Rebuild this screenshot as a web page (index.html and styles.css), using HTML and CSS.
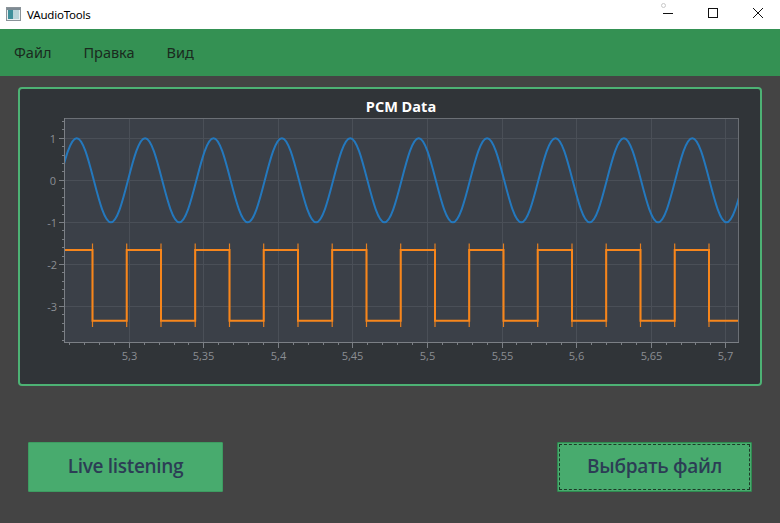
FILE: index.html
```html
<!DOCTYPE html>
<html lang="ru">
<head>
<meta charset="utf-8">
<title>VAudioTools</title>
<link rel="stylesheet" href="styles.css">
</head>
<body>
<div class="window">
  <header class="titlebar">
    <svg class="app-icon" width="15" height="14" viewBox="0 0 15 14">
      <rect x="0.5" y="0.5" width="14" height="13" fill="#e8eef0" stroke="#8a9399"/>
      <rect x="2" y="3" width="5" height="9" fill="#3f8f9a"/>
      <rect x="7" y="3" width="6" height="9" fill="#b9d3d8"/>
      <rect x="1" y="1" width="13" height="2" fill="#7d8a93"/>
    </svg>
    <span class="app-title">VAudioTools</span>
    <div class="win-controls">
      <span class="win-btn win-min">
        <span class="help-ring"></span>
        <svg width="10" height="10" viewBox="0 0 10 10"><path d="M0 5.5H10" stroke="#111" stroke-width="1"/></svg>
      </span>
      <span class="win-btn">
        <svg width="10" height="10" viewBox="0 0 10 10"><rect x="0.5" y="0.5" width="9" height="9" fill="none" stroke="#111" stroke-width="1"/></svg>
      </span>
      <span class="win-btn">
        <svg width="10" height="10" viewBox="0 0 10 10"><path d="M0 0L10 10M10 0L0 10" stroke="#111" stroke-width="1"/></svg>
      </span>
    </div>
  </header>

  <nav class="menubar">
    <span class="menu-item">Файл</span>
    <span class="menu-item">Правка</span>
    <span class="menu-item">Вид</span>
  </nav>

  <main class="content">
    <section class="chart-frame">
      <svg class="chart" width="740" height="295" viewBox="20 89 740 295">
        <defs>
          <clipPath id="plotclip"><rect x="65" y="119" width="673" height="223"/></clipPath>
        </defs>
        <text class="chart-title" x="401" y="112">PCM Data</text>
        <rect x="64.5" y="118.5" width="674" height="224" fill="#3b4048" stroke="#6b6f75"/>
        <path class="grid" d="M129.5 119V342M203.5 119V342M278.5 119V342M352.5 119V342M427.5 119V342M502.5 119V342M576.5 119V342M651.5 119V342M725.5 119V342M65 138.5H738M65 180.5H738M65 222.5H738M65 264.5H738M65 306.5H738"/>
        <path class="axis" d="M64.5 118V343M64 342.5H739"/>
        <path class="axis" d="M59 138.5H64.5M59 180.5H64.5M59 222.5H64.5M59 264.5H64.5M59 306.5H64.5M62 121.5H64.5M62 129.5H64.5M62 146.5H64.5M62 155.5H64.5M62 163.5H64.5M62 171.5H64.5M62 188.5H64.5M62 197.5H64.5M62 205.5H64.5M62 214.5H64.5M62 230.5H64.5M62 239.5H64.5M62 247.5H64.5M62 256.5H64.5M62 272.5H64.5M62 281.5H64.5M62 289.5H64.5M62 298.5H64.5M62 314.5H64.5M62 323.5H64.5M62 331.5H64.5M62 340.5H64.5"/>
        <path class="axis" d="M129.5 342V348M203.5 342V348M278.5 342V348M352.5 342V348M427.5 342V348M502.5 342V348M576.5 342V348M651.5 342V348M725.5 342V348M69.5 342V345M84.5 342V345M99.5 342V345M114.5 342V345M144.5 342V345M159.5 342V345M174.5 342V345M188.5 342V345M218.5 342V345M233.5 342V345M248.5 342V345M263.5 342V345M293.5 342V345M308.5 342V345M323.5 342V345M338.5 342V345M367.5 342V345M382.5 342V345M397.5 342V345M412.5 342V345M442.5 342V345M457.5 342V345M472.5 342V345M487.5 342V345M516.5 342V345M531.5 342V345M546.5 342V345M561.5 342V345M591.5 342V345M606.5 342V345M621.5 342V345M636.5 342V345M666.5 342V345M681.5 342V345M695.5 342V345M710.5 342V345"/>
        <g class="ylabels">
          <text x="56" y="142.5">1</text>
          <text x="56" y="184.5">0</text>
          <text x="57" y="226.5">-1</text>
          <text x="57" y="268.5">-2</text>
          <text x="57" y="310.5">-3</text>
        </g>
        <g class="xlabels">
          <text x="129.5" y="360">5,3</text>
          <text x="203.5" y="360">5,35</text>
          <text x="278.5" y="360">5,4</text>
          <text x="352.5" y="360">5,45</text>
          <text x="427.5" y="360">5,5</text>
          <text x="502.5" y="360">5,55</text>
          <text x="576.5" y="360">5,6</text>
          <text x="651.5" y="360">5,65</text>
          <text x="725.5" y="360">5,7</text>
        </g>
        <g clip-path="url(#plotclip)">
          <path class="sine" d="M59.6 180.3c5.577 -21.54 10.911 -42.05 17.1 -42.05
            s11.523 20.51 17.1 42.05s10.911 42.05 17.1 42.05s11.523 -20.51 17.1 -42.05s10.911 -42.05 17.1 -42.05
            s11.523 20.51 17.1 42.05s10.911 42.05 17.1 42.05s11.523 -20.51 17.1 -42.05s10.911 -42.05 17.1 -42.05
            s11.523 20.51 17.1 42.05s10.911 42.05 17.1 42.05s11.523 -20.51 17.1 -42.05s10.911 -42.05 17.1 -42.05
            s11.523 20.51 17.1 42.05s10.911 42.05 17.1 42.05s11.523 -20.51 17.1 -42.05s10.911 -42.05 17.1 -42.05
            s11.523 20.51 17.1 42.05s10.911 42.05 17.1 42.05s11.523 -20.51 17.1 -42.05s10.911 -42.05 17.1 -42.05
            s11.523 20.51 17.1 42.05s10.911 42.05 17.1 42.05s11.523 -20.51 17.1 -42.05s10.911 -42.05 17.1 -42.05
            s11.523 20.51 17.1 42.05s10.911 42.05 17.1 42.05s11.523 -20.51 17.1 -42.05s10.911 -42.05 17.1 -42.05
            s11.523 20.51 17.1 42.05s10.911 42.05 17.1 42.05s11.523 -20.51 17.1 -42.05s10.911 -42.05 17.1 -42.05
            s11.523 20.51 17.1 42.05s10.911 42.05 17.1 42.05s11.523 -20.51 17.1 -42.05s10.911 -42.05 17.1 -42.05
            s11.523 20.51 17.1 42.05s10.911 42.05 17.1 42.05s11.523 -20.51 17.1 -42.05s10.911 -42.05 17.1 -42.05"/>
          <path class="square" d="M64.5 250H92.5V320.7H126.7V250H161V320.7H195.2V250H229.5V320.7H263.7V250H298V320.7H332.2V250H366.5V320.7H400.7V250H435V320.7H469.2V250H503.5V320.7H537.7V250H572V320.7H606.2V250H640.5V320.7H674.7V250H709V320.7H738"/>
          <path class="spikes" d="M92.5 243.5V327M126.7 243.5V327M161 243.5V327M195.2 243.5V327M229.5 243.5V327M263.7 243.5V327M298 243.5V327M332.2 243.5V327M366.5 243.5V327M400.7 243.5V327M435 243.5V327M469.2 243.5V327M503.5 243.5V327M537.7 243.5V327M572 243.5V327M606.2 243.5V327M640.5 243.5V327M674.7 243.5V327M709 243.5V327"/>
        </g>
      </svg>
    </section>

    <div class="actions">
      <button class="btn">Live listening</button>
      <button class="btn btn-focus">Выбрать файл</button>
    </div>
  </main>
</div>
</body>
</html>
```

FILE: styles.css
```css
* { box-sizing: border-box; }

html, body {
  margin: 0;
  padding: 0;
  width: 780px;
  height: 523px;
  overflow: hidden;
  background: #444444;
}

.window {
  width: 780px;
  height: 523px;
  display: flex;
  flex-direction: column;
}

.titlebar {
  height: 29px;
  background: #ffffff;
  display: flex;
  align-items: center;
  padding-left: 6px;
  font-family: "Noto Sans", "Open Sans", sans-serif;
  font-size: 11.5px;
  color: #000;
}

.app-icon {
  display: block;
  margin-top: -1px;
}

.app-title {
  margin-left: 6px;
  margin-top: -1px;
  letter-spacing: -0.2px;
}

.win-controls {
  margin-left: auto;
  display: flex;
  height: 29px;
}

.win-btn {
  position: relative;
  width: 45px;
  height: 29px;
  display: flex;
  align-items: center;
  justify-content: center;
  padding-bottom: 3px;
}

.win-btn svg { display: block; }

.help-ring {
  position: absolute;
  left: 16px;
  top: 3px;
  width: 5px;
  height: 5px;
  border: 1px solid #c8c8c8;
  border-radius: 50%;
}

.menubar {
  height: 47px;
  background: #349153;
  display: flex;
  align-items: center;
  gap: 32px;
  padding-left: 14px;
  padding-bottom: 1px;
  font-family: "Noto Sans", "Open Sans", sans-serif;
  font-size: 14.5px;
  color: #1a2a1e;
}

.content {
  flex: 1;
  padding: 11px 18px 0 18px;
  display: flex;
  flex-direction: column;
}

.chart-frame {
  width: 744px;
  height: 299px;
  border: 2px solid #4db274;
  border-radius: 4px;
  background: #303438;
  overflow: hidden;
}

.chart { display: block; }

.chart-title {
  font-family: "Open Sans", "Noto Sans", sans-serif;
  font-weight: 700;
  font-size: 14.5px;
  fill: #ffffff;
  text-anchor: middle;
}

.grid {
  stroke: #4a4f57;
  stroke-width: 1;
  fill: none;
}

.axis {
  stroke: #7b7f85;
  stroke-width: 1;
  fill: none;
}

.ylabels text,
.xlabels text {
  font-family: "Open Sans", "Noto Sans", sans-serif;
  font-size: 11px;
  fill: #8b8e93;
}

.ylabels text { text-anchor: end; }
.xlabels text { text-anchor: middle; }

.sine {
  fill: none;
  stroke: #2478bd;
  stroke-width: 2;
}

.square {
  fill: none;
  stroke: #f7861c;
  stroke-width: 2;
}

.spikes {
  fill: none;
  stroke: #f7861c;
  stroke-width: 1.2;
  opacity: 0.9;
}

.actions {
  margin-top: 56px;
  padding: 0 10px;
  display: flex;
  justify-content: space-between;
}

.btn {
  width: 195px;
  height: 50px;
  margin: 0;
  padding: 0 0 2px 0;
  background: #48ab6e;
  border: 1px solid #3d9c61;
  border-radius: 1px;
  font-family: "Open Sans", "Noto Sans", sans-serif;
  font-weight: 600;
  font-size: 19px;
  color: #2c3d55;
  letter-spacing: -0.3px;
}

.btn-focus {
  border-color: #2f8a50;
  outline: 1px dashed #1d3a28;
  outline-offset: -3px;
}
```
